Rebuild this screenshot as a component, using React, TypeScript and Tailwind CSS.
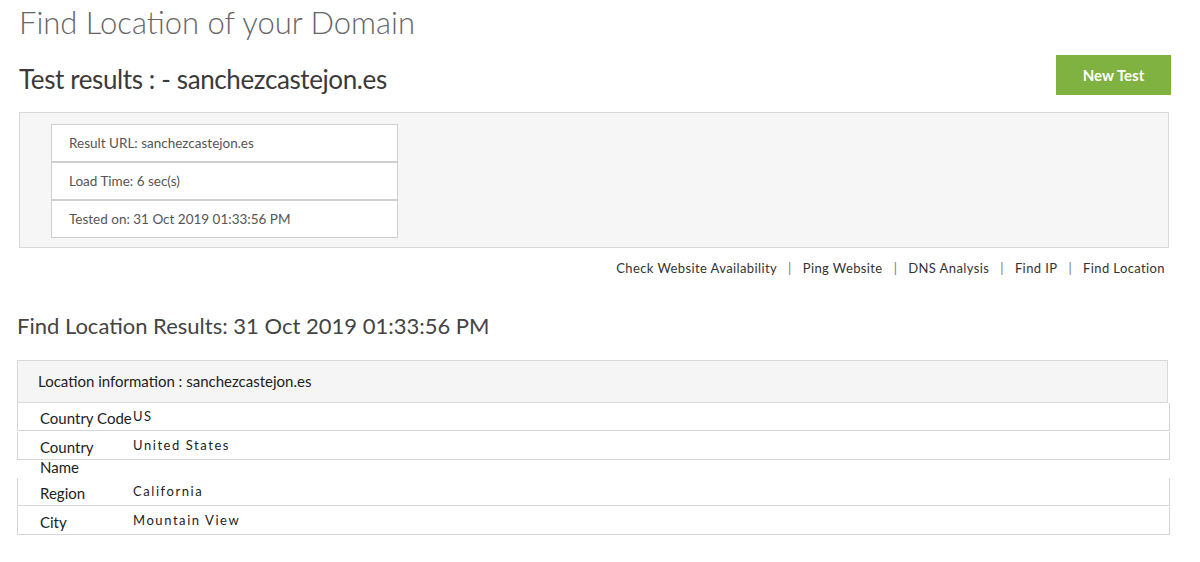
const FONT = "font-['Lato','Liberation_Sans',sans-serif]";

const summary = [
  'Result URL: sanchezcastejon.es',
  'Load Time: 6 sec(s)',
  'Tested on: 31 Oct 2019 01:33:56 PM',
];

const tools = ['Check Website Availability', 'Ping Website', 'DNS Analysis', 'Find IP', 'Find Location'];

const location = [
  { label: 'Country Code', value: 'US' },
  { label: 'Country Name', value: 'United States' },
  { label: 'Region', value: 'California' },
  { label: 'City', value: 'Mountain View' },
];

function LocationRow({ label, value }: { label: string; value: string }) {
  // the bordered strip stays 28px; a wrapping label spills below it and pushes the next row down
  return (
    <div className="grid">
      <div className="[grid-area:1/1] h-[28px] self-start border-x border-b border-[#d6d6d6]" />
      <div className="[grid-area:1/1] flex items-start pl-[23px] pt-[5px]">
        <span className="w-[93px] shrink-0 text-[15px] leading-[20px] text-[#222]">{label}</span>
        <span className="-mt-[1px] text-[13px] leading-[18px] tracking-[0.12em] text-[#222]">{value}</span>
      </div>
    </div>
  );
}

export default function App() {
  return (
    <div className={`${FONT} min-h-[562px] bg-white pl-[17px] pr-[30px]`}>
      <h1 className="pl-[2px] pt-[2px] text-[31px] leading-[40px] font-light text-[#666]">
        Find Location of your Domain
      </h1>

      <div className="mt-[13px] flex items-start justify-between pl-[2px]">
        <h2 className="mt-[8px] text-[26px] leading-[32px] font-normal tracking-[-0.015em] text-[#3a3a3a]">
          Test results : - sanchezcastejon.es
        </h2>
        <button className="-mr-[1px] h-[40px] w-[115px] bg-[#7fb241] text-[15px] font-bold text-white">
          New Test
        </button>
      </div>

      <div className="ml-[2px] mr-[1px] mt-[17px] border border-[#d9d9d9] bg-[#f6f6f6] px-[31px] pt-[11px] pb-[9px]">
        <div className="flex w-[347px] flex-col">
          {summary.map((line) => (
            <div
              key={line}
              className="flex h-[38px] items-center border border-[#cfcfcf] bg-white pl-[17px] text-[13.5px] text-[#555]"
            >
              {line}
            </div>
          ))}
        </div>
      </div>

      <nav className="mt-[10px] flex justify-end pr-[5px] text-[13px] leading-[20px] tracking-[0.03em] text-[#333]">
        {tools.map((t, i) => (
          <span key={t} className="flex">
            {i > 0 && <span className="px-[11px] text-[#777]">|</span>}
            {t}
          </span>
        ))}
      </nav>

      <h3 className="mt-[34px] text-[22px] leading-[28px] text-[#444]">
        Find Location Results: 31 Oct 2019 01:33:56 PM
      </h3>

      <div className="mt-[20px]">
        <div className="mr-[2px] flex h-[43px] items-center border border-[#d9d9d9] bg-[#f5f5f5] pl-[20px] text-[15px] text-[#222]">
          Location information : sanchezcastejon.es
        </div>
        <div className="flex flex-col gap-[1px]">
          {location.map((r) => (
            <LocationRow key={r.label} label={r.label} value={r.value} />
          ))}
        </div>
      </div>
    </div>
  );
}
